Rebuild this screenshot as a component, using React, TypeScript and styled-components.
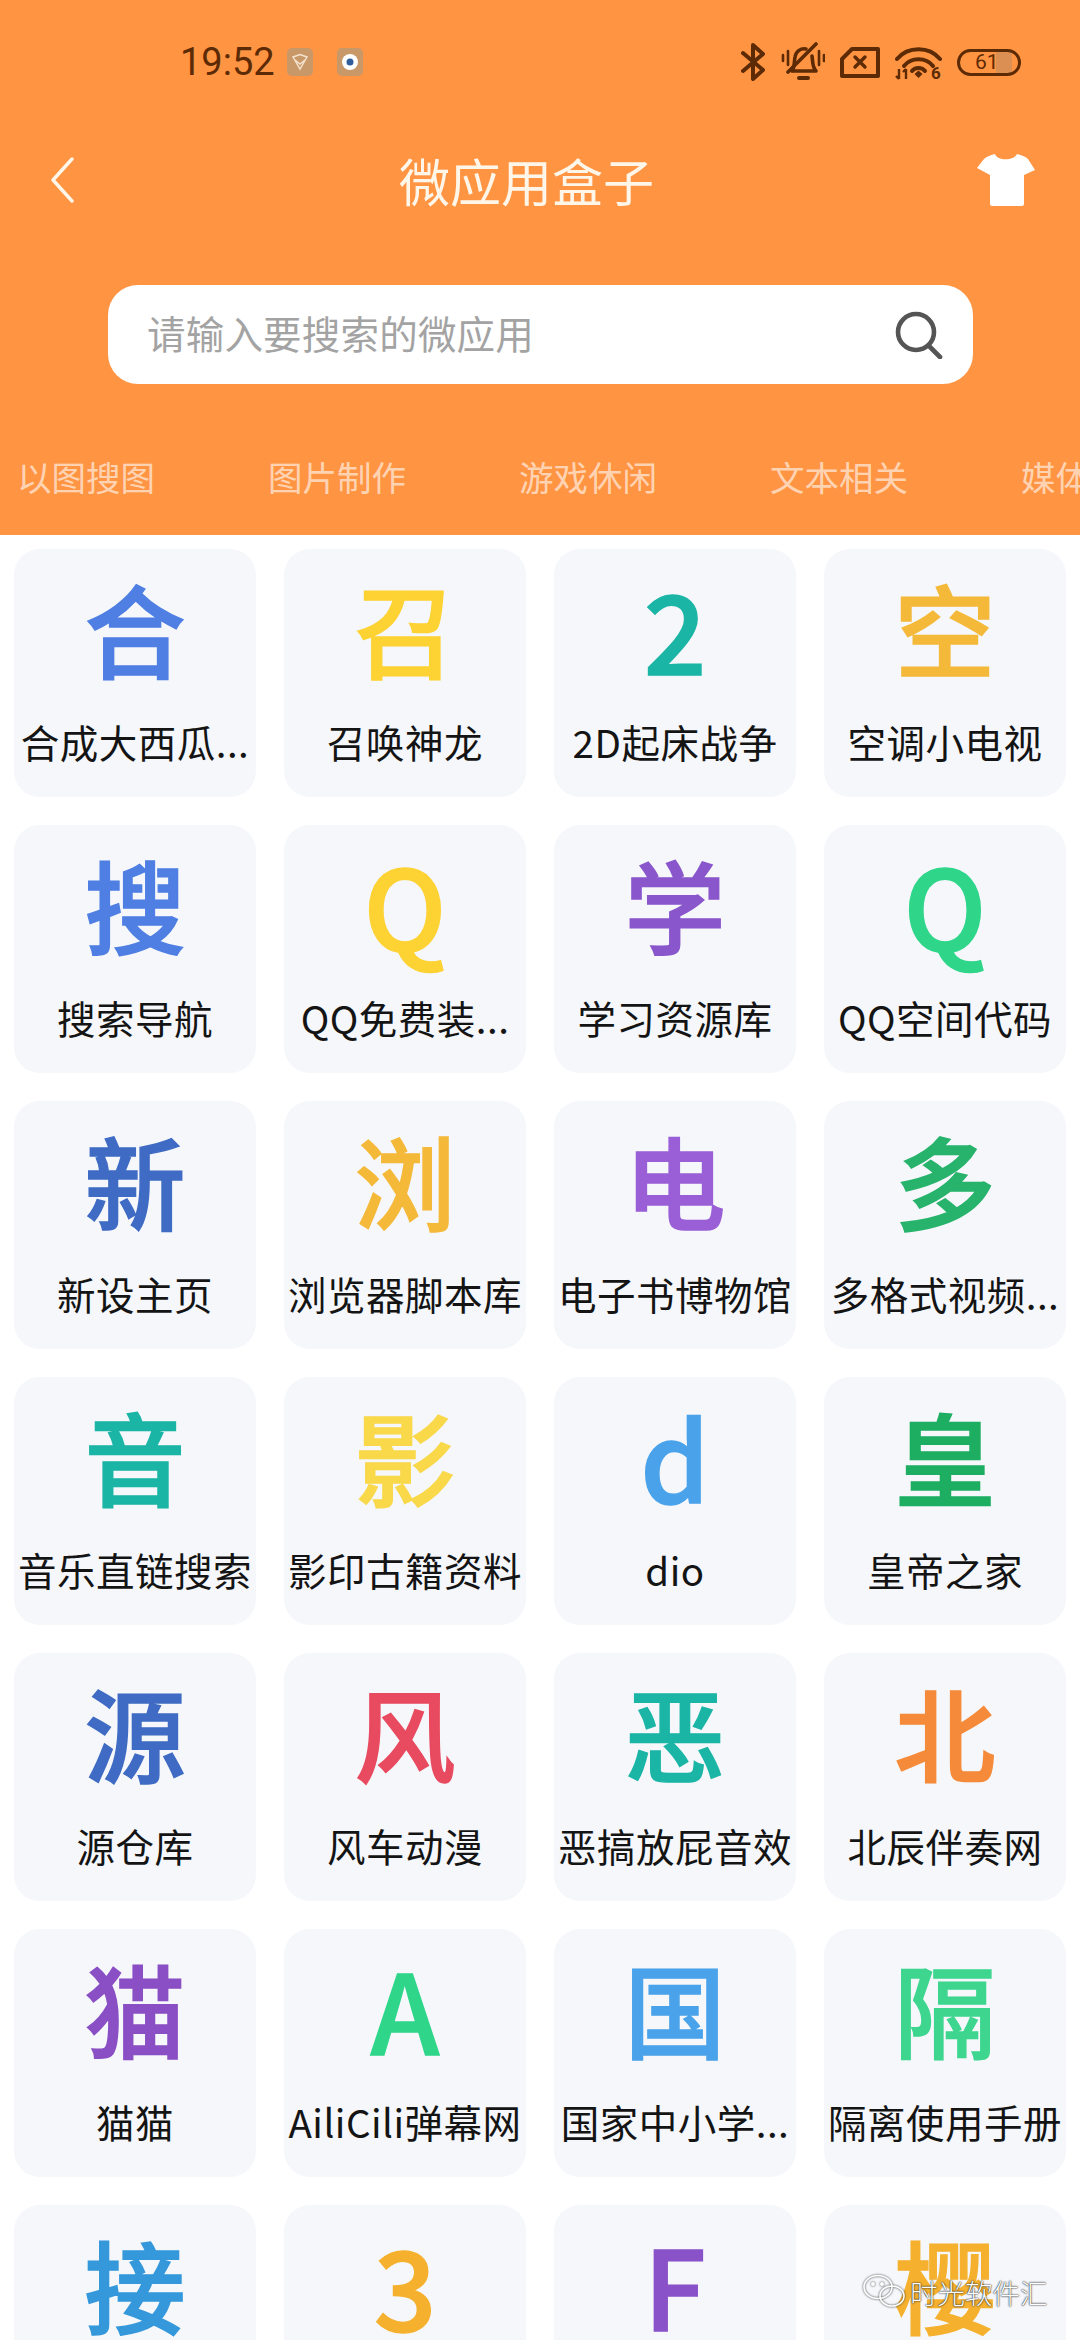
import React from "react";
import styled, { createGlobalStyle } from "styled-components";

const GlobalStyle = createGlobalStyle`
    html, body {
        margin: 0;
        padding: 0;
        background: #fff;
    }
`;

const CJK = `"Noto Sans CJK SC", "Noto Sans", sans-serif`;
const STATUS_COLOR = "#5c2a05";

const Page = styled.div`
    position: relative;
    width: 1080px;
    height: 2340px;
    overflow: hidden;
    background: #fff;
    font-family: ${CJK};
`;

const Header = styled.header`
    height: 535px;
    background: #ff9442;
    overflow: hidden;
`;

const StatusBar = styled.div`
    display: flex;
    align-items: center;
    height: 124px;
    padding: 0 59px 0 180px;
    box-sizing: border-box;
`;

const Time = styled.span`
    width: 107px;
    font-family: Roboto, sans-serif;
    font-size: 38px;
    font-weight: 400;
    color: ${STATUS_COLOR};
`;

const AppBadge = styled.span`
    display: flex;
    align-items: center;
    justify-content: center;
    width: 26px;
    height: 28px;
    margin-right: 24px;
    border-radius: 5px;
    background: #c99868;
`;

const StatusIcons = styled.div`
    display: flex;
    align-items: center;
    margin-left: auto;
    gap: 15px;
`;

const Battery = styled.span`
    display: flex;
    align-items: center;
    box-sizing: border-box;
    width: 64px;
    height: 27px;
    padding-left: 15px;
    border: 3px solid ${STATUS_COLOR};
    border-radius: 14px;
    background: linear-gradient(to right, transparent 62%, #dc8f52 62%, #dc8f52 90%, transparent 90%);
    font-family: Roboto, sans-serif;
    font-size: 21px;
    line-height: 1;
    color: ${STATUS_COLOR};
`;

const NavBar = styled.nav`
    display: flex;
    align-items: center;
    height: 112px;
    padding: 0 45px 0 50px;
`;

const Title = styled.h1`
    margin: 0 0 0 325px;
    font-size: 51px;
    font-weight: 400;
    line-height: 1;
    color: #fff6ea;
`;

const ShirtButton = styled.span`
    display: flex;
    margin-left: auto;
`;

const SearchBox = styled.div`
    display: flex;
    align-items: center;
    justify-content: space-between;
    box-sizing: border-box;
    width: 865px;
    height: 99px;
    margin: 49px 0 0 108px;
    padding: 0 30px 0 39px;
    background: #fff;
    border-radius: 30px;
`;

const Placeholder = styled.span`
    margin-top: -5px;
    font-size: 38.5px;
    letter-spacing: 0.2px;
    color: #a3a3a3;
`;

const Tabs = styled.div`
    display: flex;
    align-items: center;
    gap: 113px;
    height: 118px;
    margin-top: 33px;
    padding-left: 17px;
    white-space: nowrap;
`;

const Tab = styled.span`
    flex: none;
    font-size: 34.5px;
    color: rgba(255, 255, 255, 0.62);
`;

const Grid = styled.main`
    display: grid;
    grid-template-columns: repeat(4, 242px);
    gap: 28px;
    padding: 14px 0 0 14px;
`;

const Card = styled.div`
    display: flex;
    flex-direction: column;
    align-items: center;
    box-sizing: border-box;
    height: 248px;
    padding-top: 18px;
    background: #f5f7fb;
    border-radius: 26px;
`;

const Glyph = styled.div<{ $color: string; $latin: boolean }>`
    height: 120px;
    font-size: ${({ $latin }) => ($latin ? 110 : 101)}px;
    font-weight: 500;
    line-height: 120px;
    color: ${({ $color }) => $color};
    -webkit-text-stroke: 1.5px ${({ $color }) => $color};
`;

const Label = styled.div`
    margin-top: 29px;
    font-size: 38.5px;
    letter-spacing: 0.5px;
    line-height: 50px;
    white-space: nowrap;
    color: #141414;
`;

const Watermark = styled.div`
    position: absolute;
    left: 862px;
    top: 2274px;
    display: flex;
    align-items: center;
    gap: 2px;
    color: #fff;
    font-size: 27.5px;
    font-weight: 300;
    line-height: 36px;
    text-shadow: 0 0 2px #222, 0 0 1px #222;
`;

const WatermarkLogo = styled.span`
    display: flex;
    filter: drop-shadow(0 0 1px #333);
`;

const apps: { glyph: string; color: string; label?: string }[] = [
    { glyph: "合", color: "#4f7fe3", label: "合成大西瓜..." },
    { glyph: "召", color: "#fdd233", label: "召唤神龙" },
    { glyph: "2", color: "#1bb5a6", label: "2D起床战争" },
    { glyph: "空", color: "#f5b93a", label: "空调小电视" },
    { glyph: "搜", color: "#4f7fe3", label: "搜索导航" },
    { glyph: "Q", color: "#fdd233", label: "QQ免费装..." },
    { glyph: "学", color: "#8a56cc", label: "学习资源库" },
    { glyph: "Q", color: "#2fd68a", label: "QQ空间代码" },
    { glyph: "新", color: "#3f6bc4", label: "新设主页" },
    { glyph: "浏", color: "#f5b93a", label: "浏览器脚本库" },
    { glyph: "电", color: "#9a5fd6", label: "电子书博物馆" },
    { glyph: "多", color: "#27b36b", label: "多格式视频..." },
    { glyph: "音", color: "#1bb5a6", label: "音乐直链搜索" },
    { glyph: "影", color: "#f9d84a", label: "影印古籍资料" },
    { glyph: "d", color: "#4aa3ea", label: "dio" },
    { glyph: "皇", color: "#1eae62", label: "皇帝之家" },
    { glyph: "源", color: "#3f6bc4", label: "源仓库" },
    { glyph: "风", color: "#e84a5f", label: "风车动漫" },
    { glyph: "恶", color: "#1bb5a6", label: "恶搞放屁音效" },
    { glyph: "北", color: "#f58b3a", label: "北辰伴奏网" },
    { glyph: "猫", color: "#8a4fc4", label: "猫猫" },
    { glyph: "A", color: "#2fd68a", label: "AiliCili弹幕网" },
    { glyph: "国", color: "#4aa3ea", label: "国家中小学..." },
    { glyph: "隔", color: "#3ed68f", label: "隔离使用手册" },
    { glyph: "接", color: "#3498db" },
    { glyph: "3", color: "#f5b12e" },
    { glyph: "F", color: "#8a52c9" },
    { glyph: "樱", color: "#f5b12e" },
];

const tabs = ["以图搜图", "图片制作", "游戏休闲", "文本相关", "媒体工具"];

const ShieldIcon = () => (
    <svg width="18" height="18" viewBox="0 0 18 18" fill="none" stroke="#f5e3cf" strokeWidth="1.4">
        <path d="M2 4 L9 1.5 L16 4 L9 16 Z" />
        <path d="M4 7 L9 11 L14 7" />
    </svg>
);

const EyeIcon = () => (
    <svg width="20" height="20" viewBox="0 0 20 20">
        <circle cx="10" cy="10" r="8" fill="#fff" />
        <circle cx="10" cy="10" r="3.5" fill="#2f5d9e" />
    </svg>
);

const BluetoothIcon = () => (
    <svg width="25" height="38" viewBox="0 0 25 38" fill="none" stroke={STATUS_COLOR} strokeWidth="4" strokeLinecap="round" strokeLinejoin="round">
        <path d="M2 10 L22 27 L12 36 L12 2 L22 11 L2 28" />
    </svg>
);

const BellOffIcon = () => (
    <svg width="44" height="40" viewBox="0 0 44 40" fill="none" stroke={STATUS_COLOR} strokeWidth="3.6" strokeLinecap="round" strokeLinejoin="round">
        <path d="M11 29 C14 25 13 20 14 15 C15 9 20 6 25 7 M31 14 C32 20 31 25 35 29 L11 29" />
        <path d="M18 36 L27 36" strokeWidth="4" />
        <path d="M7 30 L35 2" />
        <path d="M2 13 L2 19 M7 9 L7 23 M38 9 L38 23 M43 13 L43 19" strokeWidth="2.6" />
    </svg>
);

const SimOffIcon = () => (
    <svg width="40" height="31" viewBox="0 0 40 31" fill="none" stroke={STATUS_COLOR} strokeLinejoin="round">
        <path d="M2 12 L12 2 L38 2 L38 29 L2 29 Z" strokeWidth="4" />
        <path d="M15 10 L25 20 M25 10 L15 20" strokeWidth="3.4" strokeLinecap="round" />
    </svg>
);

const WifiIcon = () => (
    <svg width="47" height="35" viewBox="0 0 47 35">
        <g fill="none" stroke={STATUS_COLOR} strokeWidth="4" strokeLinecap="round">
            <path d="M2 14 C13 1 34 1 45 14" />
            <path d="M9 21 C16 12 31 12 38 21" />
            <path d="M17 26 C20 22 27 22 30 26" />
        </g>
        <path d="M19.5 29 L23.5 25.5 L27.5 29 L23.5 33 Z" fill={STATUS_COLOR} />
        <path d="M4 24 L4 34 M1 31 L4 34 M11 24 L11 34 M8 27 L11 24" fill="none" stroke={STATUS_COLOR} strokeWidth="2.4" />
        <text x="36" y="34" fontFamily="Roboto, sans-serif" fontSize="17" fontWeight="700" fill={STATUS_COLOR}>6</text>
    </svg>
);

const BackIcon = () => (
    <svg width="24" height="46" viewBox="0 0 24 46" fill="none" stroke="#fff6ea" strokeWidth="3.4" strokeLinecap="round" strokeLinejoin="round">
        <path d="M22 2 L3 23 L22 44" />
    </svg>
);

const ShirtIcon = () => (
    <svg width="58" height="52" viewBox="0 0 58 52">
        <path
            fill="#fff"
            d="M18 0 C20 7 37 7 40 0 C45 1 49 3 51 5 L58 16 L47 21 L47 50 Q47 52 45 52 L15 52 Q13 52 13 50 L13 21 L0 14 L7 5 C9 3 13 1 18 0 Z"
        />
    </svg>
);

const SearchIcon = () => (
    <svg width="48" height="48" viewBox="0 0 48 48" fill="none" stroke="#555" strokeWidth="4.6" strokeLinecap="round">
        <circle cx="21" cy="21" r="18" />
        <path d="M35 36 L45 46" />
    </svg>
);

const WeChatIcon = () => (
    <svg width="46" height="36" viewBox="0 0 46 36" fill="none" stroke="#fff" strokeWidth="1.6">
        <ellipse cx="16" cy="13" rx="14" ry="11.5" />
        <ellipse cx="30" cy="22" rx="12" ry="10" />
        <circle cx="11" cy="10" r="1.2" fill="#fff" />
        <circle cx="20" cy="10" r="1.2" fill="#fff" />
    </svg>
);

const App = () => {
    return (
        <Page>
            <GlobalStyle />
            <Header>
                <StatusBar>
                    <Time>19:52</Time>
                    <AppBadge>
                        <ShieldIcon />
                    </AppBadge>
                    <AppBadge>
                        <EyeIcon />
                    </AppBadge>
                    <StatusIcons>
                        <BluetoothIcon />
                        <BellOffIcon />
                        <SimOffIcon />
                        <WifiIcon />
                        <Battery>61</Battery>
                    </StatusIcons>
                </StatusBar>
                <NavBar>
                    <BackIcon />
                    <Title>微应用盒子</Title>
                    <ShirtButton>
                        <ShirtIcon />
                    </ShirtButton>
                </NavBar>
                <SearchBox>
                    <Placeholder>请输入要搜索的微应用</Placeholder>
                    <SearchIcon />
                </SearchBox>
                <Tabs>
                    {tabs.map((tab) => (
                        <Tab key={tab}>{tab}</Tab>
                    ))}
                </Tabs>
            </Header>
            <Grid>
                {apps.map((app, index) => (
                    <Card key={index}>
                        <Glyph $color={app.color} $latin={/[A-Za-z0-9]/.test(app.glyph)}>
                            {app.glyph}
                        </Glyph>
                        {app.label && <Label>{app.label}</Label>}
                    </Card>
                ))}
            </Grid>
            <Watermark>
                <WatermarkLogo>
                    <WeChatIcon />
                </WatermarkLogo>
                时光软件汇
            </Watermark>
        </Page>
    );
};

export default App;
